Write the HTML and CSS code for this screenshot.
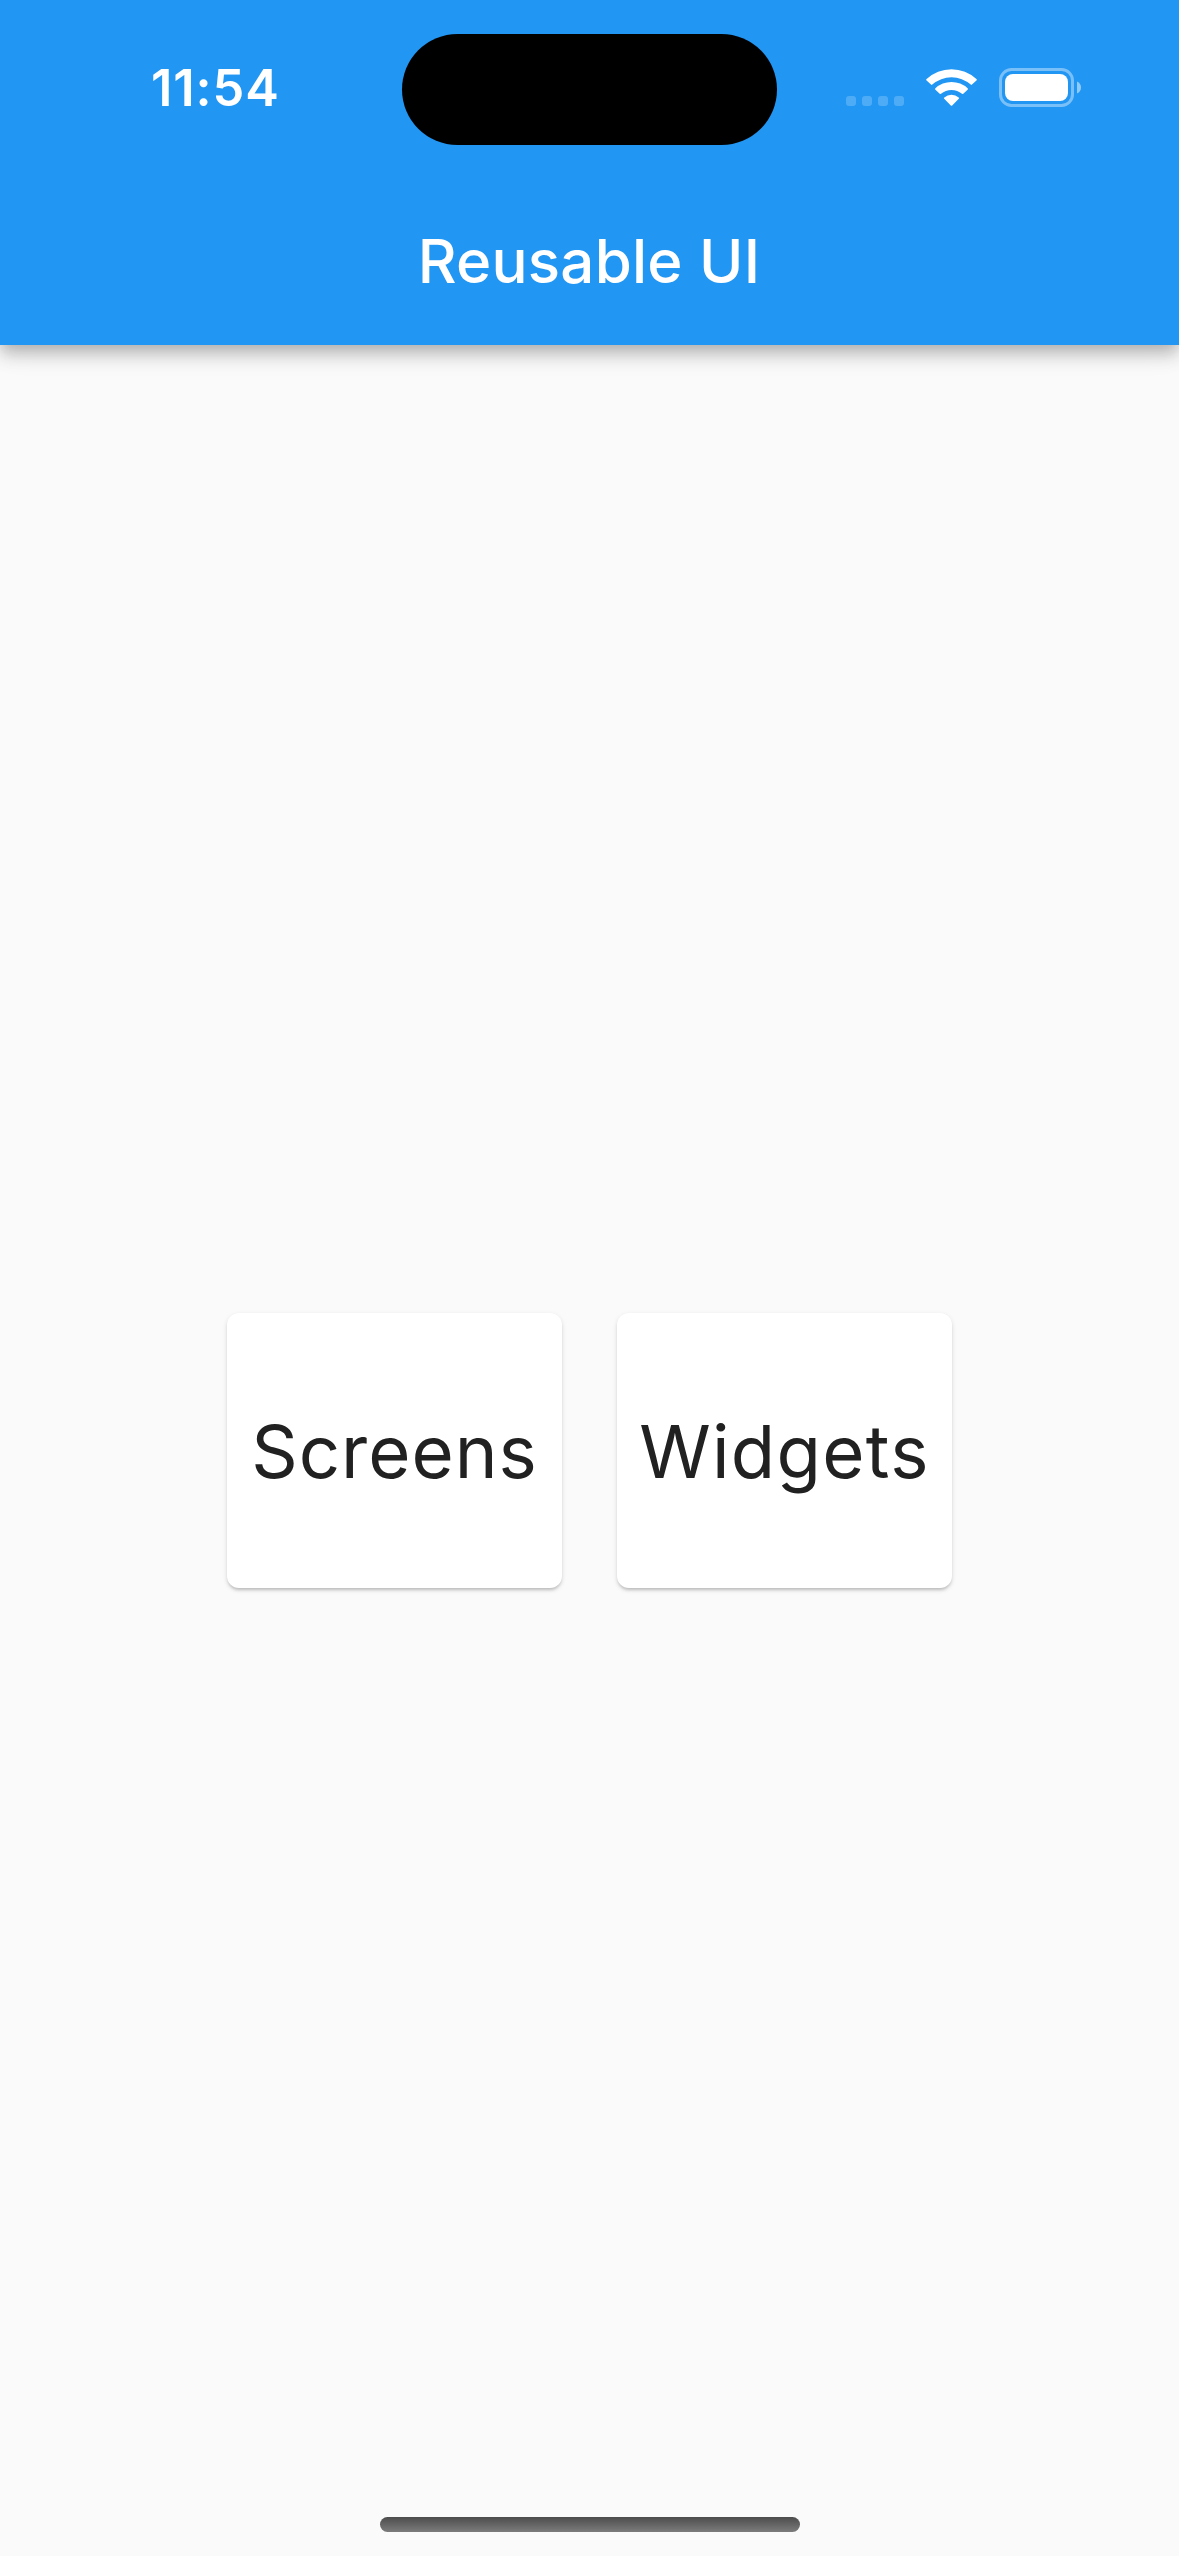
FILE: index.html
```html
<!DOCTYPE html>
<html lang="en">
<head>
<meta charset="utf-8">
<title>Reusable UI</title>
<link rel="stylesheet" href="styles.css">
</head>
<body>
<div class="screen">
  <header class="app-bar">
    <div class="status-bar">
      <span class="time">11:54</span>
      <div class="island"></div>
      <svg class="status-icons" width="240" height="40" viewBox="844 68 240 40" fill="#fff">
        <g opacity=".2">
          <rect x="846" y="96" width="10" height="10" rx="3"/>
          <rect x="862" y="96" width="10" height="10" rx="3"/>
          <rect x="878" y="96" width="10" height="10" rx="3"/>
          <rect x="894" y="96" width="10" height="10" rx="3"/>
        </g>
        <path d="M926.6 80.6Q925.8 79.7 926.6 79A36.5 36.5 0 0 1 976.4 79Q977.2 79.7 976.4 80.6L972 84.6Q971.3 85.2 970.7 84.6A29 29 0 0 0 932.3 84.6Q931.7 85.2 931 84.6Z"/>
        <path d="M935.4 89.8Q934.6 89 935.4 88.3A23.5 23.5 0 0 1 967.6 88.3Q968.4 89 967.6 89.8L963.3 93.8Q962.6 94.4 962 93.8A16.2 16.2 0 0 0 941 93.8Q940.4 94.4 939.7 93.8Z"/>
        <path d="M944.2 98.8Q943.4 98 944.3 97.4A10.8 10.8 0 0 1 958.7 97.4Q959.6 98 958.8 98.8L952.2 105.4Q951.5 106.2 950.8 105.4Z"/>
        <rect x="1000.5" y="69.5" width="72" height="36" rx="11" fill="none" stroke="#fff" stroke-width="3" opacity=".4"/>
        <rect x="1005" y="74" width="63" height="27" rx="8"/>
        <path d="M1077 81.5Q1081 83.4 1081 87.5T1077 93.5Z" opacity=".5"/>
      </svg>
    </div>
    <h1 class="title">Reusable UI</h1>
  </header>
  <main class="content">
    <button class="card"><span class="label screens">Screens</span></button>
    <button class="card"><span class="label widgets">Widgets</span></button>
  </main>
  <footer class="home-area"><div class="home-indicator"></div></footer>
</div>
</body>
</html>
```
FILE: styles.css
```css
* { box-sizing: border-box; }
body {
  margin: 0;
  background: #fafafa;
  font-family: Inter, "Liberation Sans", sans-serif;
}
.screen {
  width: 1179px;
  height: 2556px;
  display: flex;
  flex-direction: column;
  overflow: hidden;
}
.app-bar {
  height: 345px;
  flex: none;
  background: #2196f3;
  color: #fff;
  box-shadow: 0 6px 12px -3px rgba(0,0,0,.14), 0 12px 15px rgba(0,0,0,.13), 0 3px 30px rgba(0,0,0,.11);
}
.status-bar {
  height: 177px;
  display: grid;
  grid-template-columns: 402px 375px 402px;
  align-items: center;
}
.time {
  padding: 0 0 1px 151px;
  font-size: 50.5px;
  font-weight: 600;
  line-height: 60px;
  letter-spacing: .9px;
}
.island {
  height: 111px;
  margin-top: 1px;
  border-radius: 56px;
  background: #000;
}
.status-icons {
  margin-left: 67px;
  margin-bottom: 1px;
}
.title {
  margin: 0;
  height: 168px;
  line-height: 168px;
  padding-right: 1px;
  font-size: 60px;
  font-weight: 500;
  letter-spacing: .25px;
  text-align: center;
}
.content {
  flex: 1;
  display: flex;
  justify-content: center;
  align-items: center;
  gap: 55px;
}
.card {
  width: 335px;
  height: 275px;
  padding: 2px 0 0;
  border: 0;
  border-radius: 12px;
  background: #fff;
  color: #212121;
  font: 400 72.5px/84px Inter, "Liberation Sans", sans-serif;
  white-space: nowrap;
  box-shadow: 0 3px 3px -1px rgba(0,0,0,.16), 0 2px 5px rgba(0,0,0,.12);
}
.screens { letter-spacing: 1px; }
.widgets { letter-spacing: 1.3px; }
.home-area {
  height: 0;
  display: flex;
  justify-content: center;
  align-items: flex-end;
}
.home-indicator {
  flex: none;
  width: 420px;
  height: 15px;
  margin-bottom: 24px;
  border-radius: 8px;
  background: linear-gradient(#4c4c4c, #7c7c7c);
}
```
